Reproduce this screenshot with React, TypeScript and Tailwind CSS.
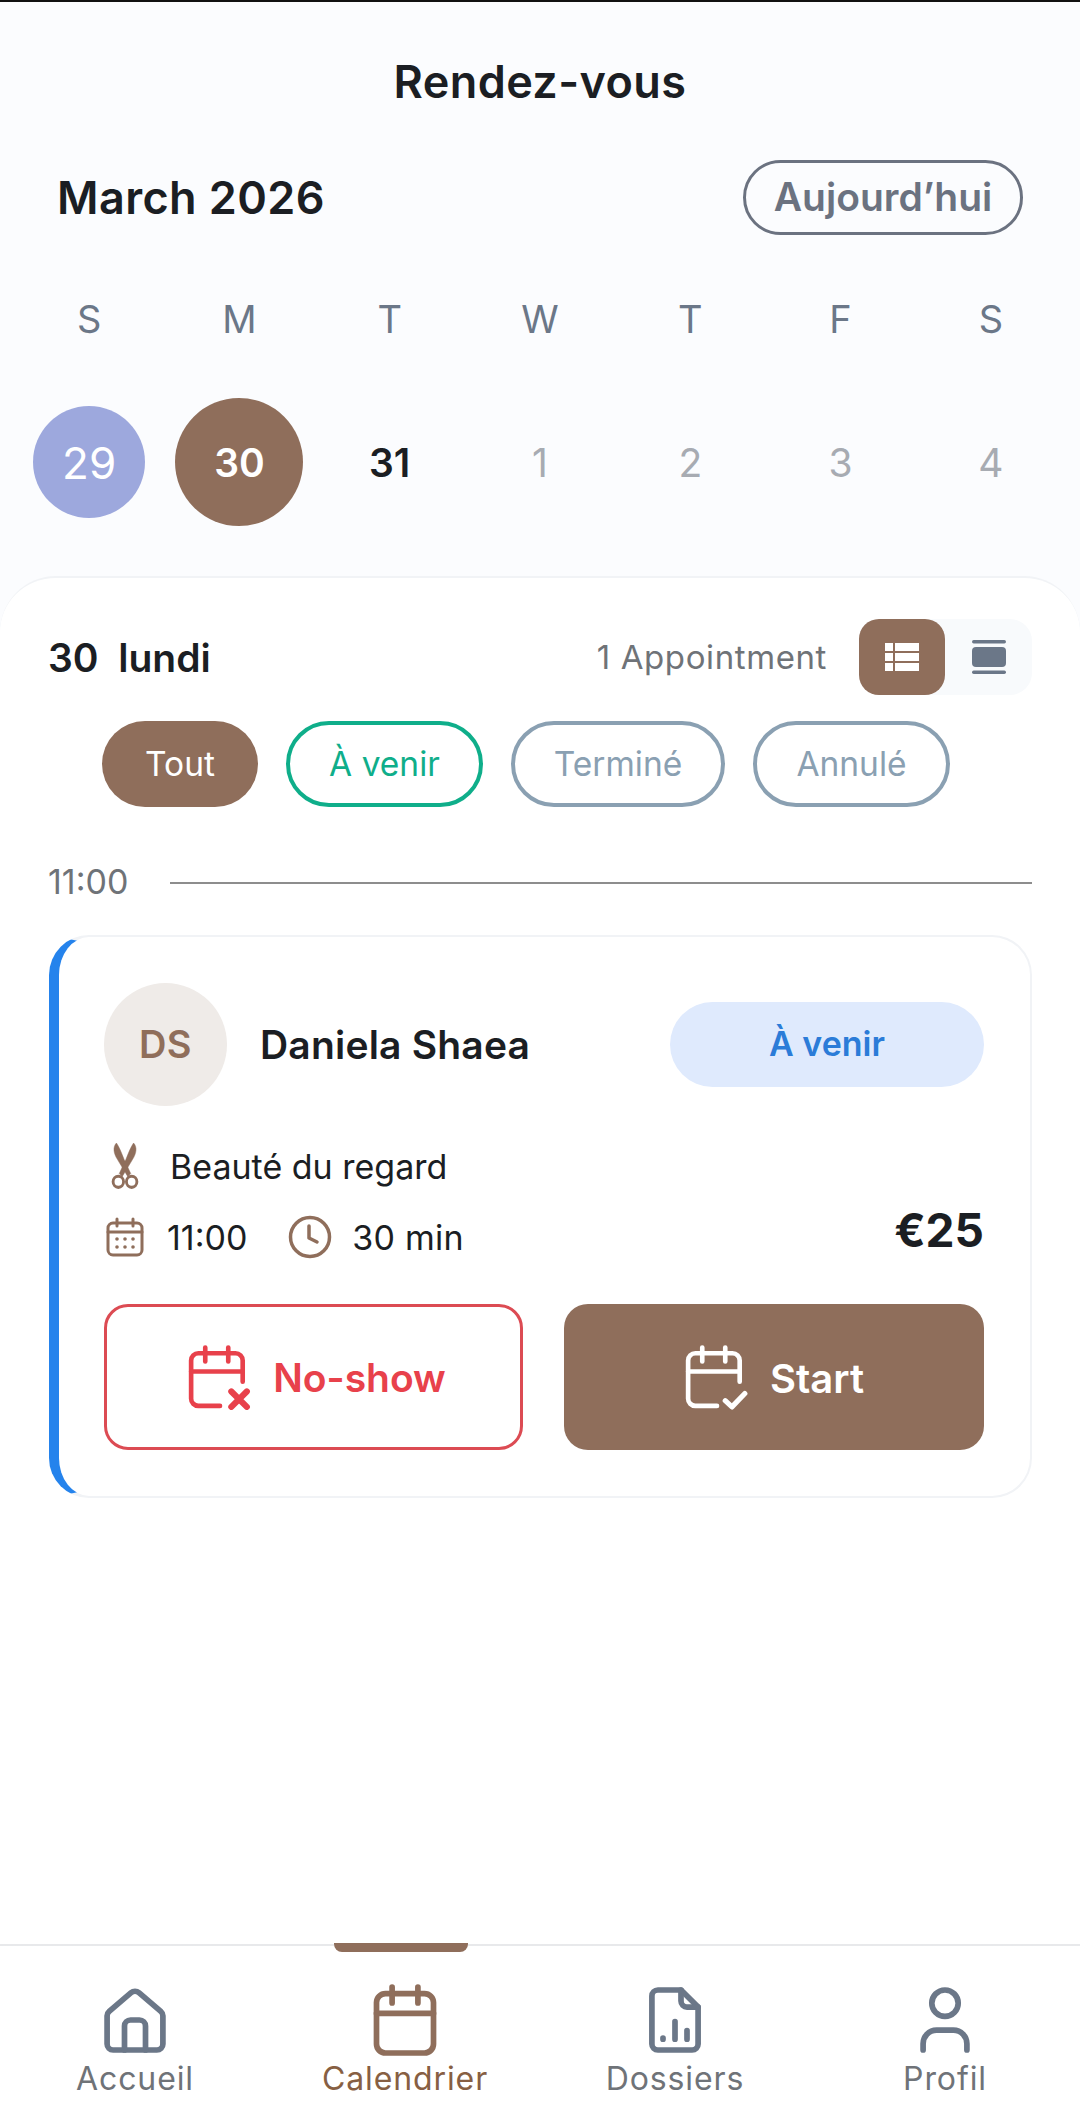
import React from "react";

const FONT = "font-['Inter','Noto_Sans',sans-serif]";

function CalendarBase({ color, children }: { color: string; children: React.ReactNode }) {
  return (
    <svg width="66" height="66" viewBox="0 0 64 64" fill="none" stroke={color} strokeLinecap="round" strokeLinejoin="round" className="shrink-0">
      <path d="M32 60H11a7 7 0 0 1-7-7V16a7 7 0 0 1 7-7h36a7 7 0 0 1 7 7v20.500" strokeWidth="4.500" />
      <path d="M4 26.700H54M17.700 3.500V17M40 3.500V17" strokeWidth="4.500" />
      {children}
    </svg>
  );
}

function NavIcon({ children, color }: { children: React.ReactNode; color: string }) {
  return (
    <svg width="72" height="72" viewBox="0 0 24 24" fill="none" stroke={color} strokeWidth="1.900" strokeLinecap="round" strokeLinejoin="round">
      {children}
    </svg>
  );
}

function NavItem({ label, active, children }: { label: string; active?: boolean; children: React.ReactNode }) {
  return (
    <div className="relative flex flex-col items-center">
      {active && <div className="absolute top-[-3px] left-[64px] w-[134px] h-[9px] rounded-b-[8px] bg-[#8f6e5b]" />}
      <div className="mt-[38px]">{children}</div>
      <span className={`mt-[4px] text-[32px] leading-[38px] tracking-[0.9px] ${active ? "text-[#875f43]" : "text-[#6f7378]"}`}>{label}</span>
    </div>
  );
}

function Chip({ label, cls }: { label: string; cls: string }) {
  return (
    <div className={`h-[86px] rounded-[43px] flex items-center justify-center text-[33.5px] ${cls}`}>{label}</div>
  );
}

export default function App() {
  const week = ["S", "M", "T", "W", "T", "F", "S"];
  return (
    <div className={`${FONT} w-[1080px] h-[2121px] flex flex-col bg-[#fbfcfe] overflow-hidden`}>
      <div className="h-[2px] bg-[#111111] shrink-0" />
      <h1 className="mt-[53px] text-center text-[45px] leading-[54px] font-semibold text-[#1b1e23] tracking-[0.4px]">Rendez-vous</h1>

      <div className="mt-[51px] pl-[57px] pr-[57px] flex items-center justify-between h-[75px]">
        <span className="text-[45px] font-semibold text-[#1b1e23] tracking-[0.4px]">March 2026</span>
        <div className="w-[280px] h-[75px] rounded-[38px] border-[3px] border-[#6b7280] flex items-center justify-center text-[39px] font-semibold text-[#6b7280]">Aujourd’hui</div>
      </div>

      <div className="mt-[59px] px-[14px] grid grid-cols-7 text-center text-[38px] leading-[50px] text-[#6b7788]">
        {week.map((d, i) => (
          <span key={i}>{d}</span>
        ))}
      </div>

      <div className="mt-[54px] px-[14px] grid grid-cols-7 h-[128px] items-center justify-items-center text-[39px]">
        <div className="w-[112px] h-[112px] pt-[2px] rounded-full bg-[#9da8dd] flex items-center justify-center text-[44px] text-white">29</div>
        <div className="w-[128px] h-[128px] pt-[2px] rounded-full bg-[#8f6e5b] flex items-center justify-center font-semibold text-[39px] text-white">30</div>
        <div className="pt-[3px] font-semibold text-[#1b1e23] text-[39px]">31</div>
        <div className="pt-[3px] text-[#a7abb2]">1</div>
        <div className="pt-[3px] text-[#a7abb2]">2</div>
        <div className="pt-[3px] text-[#a7abb2]">3</div>
        <div className="pt-[3px] text-[#a7abb2]">4</div>
      </div>

      <main className="mt-[50px] flex-1 bg-white rounded-t-[56px] border-t-2 border-[#f1f3f6] pt-[41px] px-[48px] flex flex-col">
        <div className="flex items-center justify-between h-[76px]">
          <span className="mt-[3px] text-[39px] font-semibold text-[#1b1e23] whitespace-pre">30  lundi</span>
          <div className="flex items-center">
            <span className="mt-[1px] text-[33px] text-[#6f7378] mr-[32px] tracking-[0.6px]">1 Appointment</span>
            <div className="flex w-[173px] h-[76px] rounded-[22px] bg-[#f8fafc]">
              <div className="w-[86px] h-[76px] rounded-[20px] bg-[#8f6e5b] flex items-center justify-center">
                <svg width="34" height="28" viewBox="0 0 34 28" fill="#ffffff">
                  <rect x="0" y="0" width="8" height="8" />
                  <rect x="10" y="0" width="24" height="8" />
                  <rect x="0" y="10" width="8" height="8" />
                  <rect x="10" y="10" width="24" height="8" />
                  <rect x="0" y="20" width="8" height="8" />
                  <rect x="10" y="20" width="24" height="8" />
                </svg>
              </div>
              <div className="flex-1 flex items-center justify-center">
                <svg width="34" height="34" viewBox="0 0 34 34" fill="#6b7788">
                  <rect x="0" y="0" width="34" height="3.500" rx="1.700" />
                  <rect x="0" y="7" width="34" height="20" rx="4" />
                  <rect x="0" y="30.500" width="34" height="3.500" rx="1.700" />
                </svg>
              </div>
            </div>
          </div>
        </div>

        <div className="mt-[26px] ml-[54px] flex gap-[28px]">
          <Chip label="Tout" cls="w-[156px] bg-[#8f6e5b] text-white" />
          <Chip label="À venir" cls="w-[197px] border-[4px] border-[#0fae8a] text-[#0fae8a]" />
          <Chip label="Terminé" cls="w-[214px] border-[4px] border-[#8aa0b2] text-[#8aa0b2]" />
          <Chip label="Annulé" cls="w-[197px] border-[4px] border-[#8aa0b2] text-[#8aa0b2]" />
        </div>

        <div className="mt-[54px] flex items-center h-[44px]">
          <span className="mt-[-3px] w-[122px] text-[34px] text-[#6f7378]">11:00</span>
          <div className="flex-1 h-[2px] bg-[#8d8d8d]" />
        </div>

        <div className="mt-[30px] ml-[1px] h-[563px] rounded-[40px] border-2 border-[#f1f3f6] border-l-[10px] border-l-[#2583ec] pt-[46px] pl-[45px] pr-[46px] flex flex-col">
          <div className="flex items-center h-[123px]">
            <div className="w-[123px] h-[123px] rounded-full bg-[#efebe8] flex items-center justify-center text-[38px] font-semibold text-[#8f6e5b] tracking-[0.5px]">DS</div>
            <span className="mt-[2px] ml-[33px] text-[39px] font-semibold text-[#1b1e23] tracking-[0.2px]">Daniela Shaea</span>
            <div className="ml-auto w-[314px] h-[85px] rounded-[43px] bg-[#dfeafd] flex items-center justify-center text-[34px] font-semibold text-[#2b7cd8] pb-[2px]">À venir</div>
          </div>

          <div className="mt-[34px] flex items-center h-[52px]">
            <svg width="40" height="53" viewBox="0 0 42 52" fill="#8f6e5b" stroke="#8f6e5b" preserveAspectRatio="none" className="ml-[1px] mt-[1px] mb-[-1px]">
              <path strokeWidth="0.500" d="M12 2C8 6 9 12 13 18L24 35L27 32L20 18C17 11 15 6 12 2Z" />
              <path strokeWidth="0.500" d="M32 2C36 6 35 12 31 18L20 35L17 32L24 18C27 11 29 6 32 2Z" transform="translate(-2 0)" />
              <circle cx="14" cy="40" r="5.500" fill="none" strokeWidth="3" />
              <circle cx="28" cy="40" r="5.500" fill="none" strokeWidth="3" />
            </svg>
            <span className="ml-[25px] text-[34px] text-[#1b1e23]">Beauté du regard</span>
          </div>

          <div className="mt-[19px] flex items-center h-[52px]">
            <svg width="40" height="40" viewBox="0 0 40 40" fill="none" stroke="#8f6e5b" strokeWidth="3" strokeLinecap="round" className="ml-[1px]">
              <rect x="3" y="6" width="34" height="32" rx="5" />
              <path d="M3 15H37M12 2V9M28 2V9" />
              <g fill="#8f6e5b" stroke="none">
                <circle cx="12" cy="22" r="1.800" /><circle cx="20" cy="22" r="1.800" /><circle cx="28" cy="22" r="1.800" />
                <circle cx="12" cy="30" r="1.800" /><circle cx="20" cy="30" r="1.800" /><circle cx="28" cy="30" r="1.800" />
              </g>
            </svg>
            <span className="ml-[22px] text-[34px] text-[#1b1e23]">11:00</span>
            <svg width="44" height="44" viewBox="0 0 44 44" fill="none" stroke="#8f6e5b" strokeWidth="3.500" strokeLinecap="round" strokeLinejoin="round" className="ml-[41px]">
              <circle cx="22" cy="22" r="19.500" />
              <path d="M21 11V23L29 27" />
            </svg>
            <span className="ml-[20px] text-[34px] text-[#1b1e23] tracking-[0.2px]">30 min</span>
            <span className="ml-auto text-[46px] font-bold text-[#1b1e23] mt-[-14px]">€25</span>
          </div>

          <div className="mt-[41px] flex justify-between">
            <div className="w-[419px] h-[146px] pl-[6px] rounded-[24px] border-[3px] border-[#dc4b53] flex items-center justify-center gap-[20px]">
              <CalendarBase color="#e8414b">
                <path d="M43 46L58 61M58 46L43 61" strokeWidth="6" />
              </CalendarBase>
              <span className="mt-[3px] text-[39px] font-semibold text-[#e8414b]">No-show</span>
            </div>
            <div className="w-[420px] h-[146px] rounded-[24px] bg-[#8f6e5b] flex items-center justify-center gap-[20px]">
              <CalendarBase color="#ffffff">
                <path d="M40 55L46.500 61L59 48" strokeWidth="5" />
              </CalendarBase>
              <span className="mt-[3px] text-[40px] font-semibold text-white">Start</span>
            </div>
          </div>
        </div>
      </main>

      <nav className="shrink-0 h-[177px] bg-white border-t-2 border-[#e8e9eb] grid grid-cols-4">
        <NavItem label="Accueil">
          <NavIcon color="#6b7788">
            <path d="M2.700 10.600a2 2 0 0 1 .7-1.500l7.300-6.200a2 2 0 0 1 2.600 0l7.300 6.200a2 2 0 0 1 .7 1.500V20a2 2 0 0 1-2 2H4.700a2 2 0 0 1-2-2z" />
            <path d="M8.500 22v-8a2 2 0 0 1 2-2h3a2 2 0 0 1 2 2v8" />
          </NavIcon>
        </NavItem>
        <NavItem label="Calendrier" active>
          <NavIcon color="#8f6e5b">
            <rect x="2.500" y="3.200" width="19" height="19.800" rx="3" />
            <path d="M2.500 9.800H21.500M7.700 1V6.300M16.300 1V6.300" />
          </NavIcon>
        </NavItem>
        <NavItem label="Dossiers">
          <NavIcon color="#6b7788">
            <path d="M6.300 2H14l5.700 5.700V20a2 2 0 0 1-2 2H6.300a2 2 0 0 1-2-2V4a2 2 0 0 1 2-2z" />
            <path d="M14 2v3.700a2 2 0 0 0 2 2h3.700" />
            <path d="M8 18v.4M12 12.500V18.400M16 15.500V18.400" />
          </NavIcon>
        </NavItem>
        <NavItem label="Profil">
          <NavIcon color="#6b7788">
            <circle cx="12" cy="6.400" r="4.400" />
            <path d="M4.700 22v-2a4.500 4.500 0 0 1 4.500-4.600h5.600a4.500 4.500 0 0 1 4.500 4.600v2" />
          </NavIcon>
        </NavItem>
      </nav>
    </div>
  );
}
